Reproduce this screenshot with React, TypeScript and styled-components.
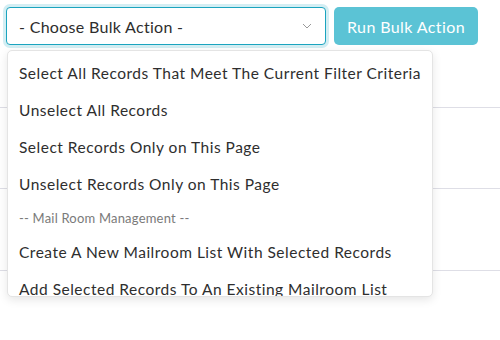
import React from "react";
import styled, { createGlobalStyle } from "styled-components";

const Global = createGlobalStyle`
  html, body { margin: 0; padding: 0; background: #fff; }
  body { font-family: Lato, "Open Sans", sans-serif; color: #333; }
`;

const Page = styled.div`
  width: 500px;
  height: 340px;
  overflow: hidden;
  position: relative;
`;

const Toolbar = styled.div`
  display: flex;
  align-items: flex-start;
  gap: 8px;
  padding: 7px 0 0 6px;
`;

const SelectWrap = styled.div`
  position: relative;
  width: 320px;
  z-index: 2;
`;

const SelectBox = styled.div`
  box-sizing: border-box;
  height: 38px;
  border: 1px solid #1ba4bf;
  border-radius: 4px;
  box-shadow: 0 0 0 3px #d3eef3;
  display: flex;
  align-items: center;
  justify-content: space-between;
  padding: 0 13px 0 12px;
  font-size: 16px;
  letter-spacing: 0.3px;
  color: #2d2d2d;
  background: #fff;
`;

const RunButton = styled.button`
  box-sizing: border-box;
  height: 38px;
  width: 144px;
  border: none;
  border-radius: 5px;
  background: #5bc3d5;
  color: #fff;
  font-family: inherit;
  font-size: 16px;
  letter-spacing: 0.4px;
  padding: 0;
`;

const Menu = styled.div`
  position: absolute;
  top: 43px;
  left: 1px;
  width: 426px;
  height: 247px;
  box-sizing: border-box;
  border: 1px solid #e4e4e4;
  border-radius: 5px;
  background: #fff;
  box-shadow: 0 3px 10px rgba(0, 0, 0, 0.1);
  overflow: hidden;
  padding-top: 3px;
`;

const Item = styled.div`
  height: 37px;
  display: flex;
  align-items: center;
  padding-left: 11px;
  font-size: 15.5px;
  letter-spacing: 0.5px;
  color: #2e2e2e;
  white-space: nowrap;
`;

const GroupLabel = styled.div`
  height: 31px;
  display: flex;
  align-items: center;
  padding-left: 11px;
  font-size: 13px;
  letter-spacing: 0.2px;
  color: #7a7a7a;
  white-space: nowrap;
`;

const Table = styled.div`
  display: flex;
  flex-direction: column;
`;

const Row = styled.div<{ $h: number }>`
  height: ${(p) => p.$h}px;
  border-bottom: 1px solid #dedee6;
`;

const Chevron = () => (
  <svg width="10" height="6" viewBox="0 0 10 6" fill="none">
    <path d="M1 1l4 4 4-4" stroke="#999" strokeWidth="1" />
  </svg>
);

export default function App() {
  return (
    <Page>
      <Global />
      <Toolbar>
        <SelectWrap>
          <SelectBox>
            <span>- Choose Bulk Action -</span>
            <Chevron />
          </SelectBox>
          <Menu>
            <Item>Select All Records That Meet The Current Filter Criteria</Item>
            <Item>Unselect All Records</Item>
            <Item>Select Records Only on This Page</Item>
            <Item>Unselect Records Only on This Page</Item>
            <GroupLabel>-- Mail Room Management --</GroupLabel>
            <Item>Create A New Mailroom List With Selected Records</Item>
            <Item>Add Selected Records To An Existing Mailroom List</Item>
          </Menu>
        </SelectWrap>
        <RunButton>Run Bulk Action</RunButton>
      </Toolbar>
      <Table>
        <Row $h={62} />
        <Row $h={80} />
        <Row $h={81} />
      </Table>
    </Page>
  );
}
